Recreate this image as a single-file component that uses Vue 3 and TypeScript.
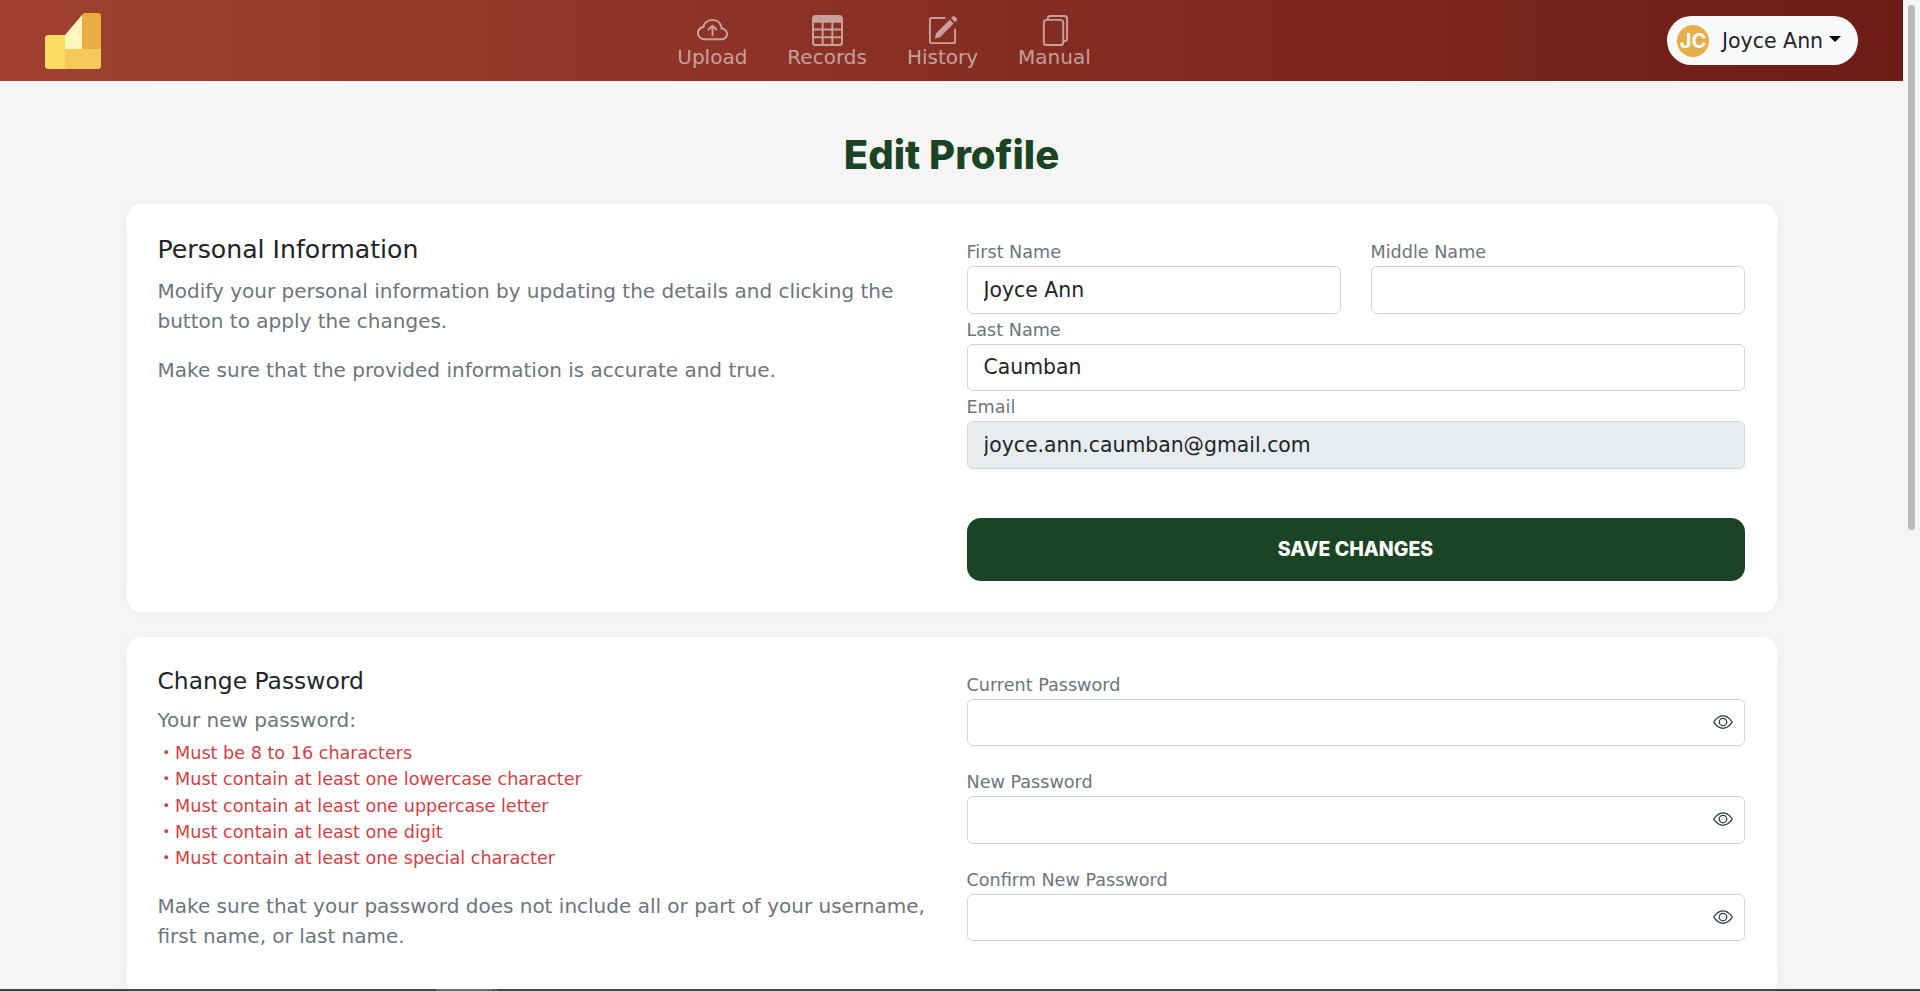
<script setup lang="ts">
const rules: string[] = [
  'Must be 8 to 16 characters',
  'Must contain at least one lowercase character',
  'Must contain at least one uppercase letter',
  'Must contain at least one digit',
  'Must contain at least one special character',
]
const passwords: string[] = ['Current Password', 'New Password', 'Confirm New Password']
</script>

<template>
  <div class="screen">
    <div class="viewport">
      <div class="page">
        <header class="topbar">
          <svg class="logo" viewBox="0 0 56 56" aria-label="Logo">
            <path d="M20 22H3a3 3 0 0 0-3 3v28a3 3 0 0 0 3 3h17z" fill="#fadc63" />
            <path d="M20 22 37 2v34H20z" fill="#fff6bd" />
            <path d="M37 2l2-2h14a3 3 0 0 1 3 3v33H37z" fill="#e8ad47" />
            <path d="M20 36h36v17a3 3 0 0 1-3 3H20z" fill="#f5ca5a" />
          </svg>
          <nav class="nav">
            <a class="nav-item">
              <svg viewBox="0 0 16 16" fill="currentColor">
                <path fill-rule="evenodd" d="M7.646 5.146a.5.5 0 0 1 .708 0l2 2a.5.5 0 0 1-.708.708L8.5 6.707V10.5a.5.5 0 0 1-1 0V6.707L6.354 7.854a.5.5 0 1 1-.708-.708l2-2z" />
                <path d="M4.406 3.342A5.53 5.53 0 0 1 8 2c2.69 0 4.923 2 5.166 4.579C14.758 6.804 16 8.137 16 9.773 16 11.569 14.502 13 12.687 13H3.781C1.708 13 0 11.366 0 9.318c0-1.763 1.266-3.223 2.942-3.593.143-.863.698-1.723 1.464-2.383zm.653.757c-.757.653-1.153 1.44-1.153 2.056v.448l-.445.049C2.064 6.805 1 7.952 1 9.318 1 10.785 2.23 12 3.781 12h8.906C13.98 12 15 10.988 15 9.773c0-1.216-1.02-2.228-2.313-2.228h-.5v-.5C12.188 4.825 10.328 3 8 3a4.53 4.53 0 0 0-2.941 1.1z" />
              </svg>
              <span>Upload</span>
            </a>
            <a class="nav-item">
              <svg viewBox="0 0 16 16" fill="currentColor">
                <path d="M0 2a2 2 0 0 1 2-2h12a2 2 0 0 1 2 2v12a2 2 0 0 1-2 2H2a2 2 0 0 1-2-2V2zm15 2h-4v3h4V4zm0 4h-4v3h4V8zm0 4h-4v3h3a1 1 0 0 0 1-1v-2zm-5 3v-3H6v3h4zm-5 0v-3H1v2a1 1 0 0 0 1 1h3zm-4-4h4V8H1v3zm0-4h4V4H1v3zm5-3v3h4V4H6zm4 4H6v3h4V8z" />
              </svg>
              <span>Records</span>
            </a>
            <a class="nav-item">
              <svg viewBox="0 0 16 16" fill="currentColor">
                <path d="M15.502 1.94a.5.5 0 0 1 0 .706L14.459 3.69l-2-2L13.502.646a.5.5 0 0 1 .707 0l1.293 1.293zm-1.75 2.456-2-2L4.939 9.21a.5.5 0 0 0-.121.196l-.805 2.414a.25.25 0 0 0 .316.316l2.414-.805a.5.5 0 0 0 .196-.12l6.813-6.814z" />
                <path fill-rule="evenodd" d="M1 13.5A1.5 1.5 0 0 0 2.5 15h11a1.5 1.5 0 0 0 1.5-1.5v-6a.5.5 0 0 0-1 0v6a.5.5 0 0 1-.5.5h-11a.5.5 0 0 1-.5-.5v-11a.5.5 0 0 1 .5-.5H9a.5.5 0 0 0 0-1H2.5A1.5 1.5 0 0 0 1 2.5v11z" />
              </svg>
              <span>History</span>
            </a>
            <a class="nav-item">
              <svg viewBox="0 0 16 16" fill="currentColor">
                <path d="M13 0H6a2 2 0 0 0-2 2 2 2 0 0 0-2 2v10a2 2 0 0 0 2 2h7a2 2 0 0 0 2-2 2 2 0 0 0 2-2V2a2 2 0 0 0-2-2zm0 13V4a2 2 0 0 0-2-2H5a1 1 0 0 1 1-1h7a1 1 0 0 1 1 1v10a1 1 0 0 1-1 1zM3 4a1 1 0 0 1 1-1h7a1 1 0 0 1 1 1v10a1 1 0 0 1-1 1H4a1 1 0 0 1-1-1V4z" />
              </svg>
              <span>Manual</span>
            </a>
          </nav>
          <button class="user" type="button">
            <span class="avatar">JC</span>
            <span class="user-name">Joyce Ann</span>
            <span class="caret"></span>
          </button>
        </header>

        <main class="content">
          <h1 class="title">Edit Profile</h1>

          <section class="card">
            <div class="intro">
              <h2 class="heading">Personal Information</h2>
              <p class="text first">Modify your personal information by updating the details and clicking the button to apply the changes.</p>
              <p class="text next">Make sure that the provided information is accurate and true.</p>
            </div>
            <form class="form" @submit.prevent>
              <div class="pair">
                <label class="field">
                  <span class="label">First Name</span>
                  <input class="input" type="text" value="Joyce Ann" />
                </label>
                <label class="field">
                  <span class="label">Middle Name</span>
                  <input class="input" type="text" />
                </label>
              </div>
              <label class="field">
                <span class="label">Last Name</span>
                <input class="input" type="text" value="Caumban" />
              </label>
              <label class="field">
                <span class="label">Email</span>
                <input class="input" type="text" value="joyce.ann.caumban@gmail.com" disabled />
              </label>
              <button class="save" type="submit">SAVE CHANGES</button>
            </form>
          </section>

          <section class="card">
            <div class="intro">
              <h2 class="heading small">Change Password</h2>
              <p class="text lead">Your new password:</p>
              <ul class="rules">
                <li v-for="rule in rules" :key="rule"><span class="dot">・</span>{{ rule }}</li>
              </ul>
              <p class="text note">Make sure that your password does not include all or part of your username, first name, or last name.</p>
            </div>
            <form class="form" @submit.prevent>
              <label v-for="name in passwords" :key="name" class="field spaced">
                <span class="label">{{ name }}</span>
                <span class="password">
                  <input class="input" type="password" />
                  <svg class="eye" viewBox="0 0 16 16" fill="currentColor">
                    <path d="M16 8s-3-5.5-8-5.5S0 8 0 8s3 5.5 8 5.5S16 8 16 8zM1.173 8a13.133 13.133 0 0 1 1.66-2.043C4.12 4.668 5.88 3.5 8 3.5c2.12 0 3.879 1.168 5.168 2.457A13.133 13.133 0 0 1 14.828 8c-.058.087-.122.183-.195.288-.335.48-.83 1.12-1.465 1.755C11.879 11.332 10.119 12.5 8 12.5c-2.12 0-3.879-1.168-5.168-2.457A13.134 13.134 0 0 1 1.172 8z" />
                    <path d="M8 5.5a2.5 2.5 0 1 0 0 5 2.5 2.5 0 0 0 0-5zM4.5 8a3.5 3.5 0 1 1 7 0 3.5 3.5 0 0 1-7 0z" />
                  </svg>
                </span>
              </label>
            </form>
          </section>
        </main>
      </div>
      <div class="rail"><div class="thumb"></div></div>
    </div>
    <div class="strip"><span class="strip-a"></span><span class="strip-b"></span></div>
  </div>
</template>

<style scoped>
.screen {
  height: 991px;
  display: flex;
  flex-direction: column;
  overflow: hidden;
  font-family: "DejaVu Sans", sans-serif;
  color: #212529;
}
.viewport {
  height: 989px;
  display: flex;
  overflow: hidden;
}
.page {
  flex: 1;
  min-width: 0;
  height: 989px;
  overflow: hidden;
}
.rail {
  width: 17px;
  flex: none;
  padding: 5px 5px 0;
  box-sizing: border-box;
}
.thumb {
  width: 7px;
  height: 525px;
  border-radius: 4px;
  background: #b9b9b9;
}
.strip {
  height: 2px;
  background: #444;
  display: flex;
  padding-left: 436px;
}
.strip-a {
  width: 56px;
  background: #6c6c6c;
}
.strip-b {
  width: 5px;
  background: #555;
}
.topbar {
  height: 81px;
  padding: 0 45px;
  display: flex;
  align-items: center;
  justify-content: space-between;
  background: linear-gradient(90deg, #a04130 0%, #6e1b17 100%);
}
.logo {
  width: 56px;
  height: 56px;
  flex: none;
}
.nav {
  display: flex;
  gap: 40px;
}
.nav-item {
  display: flex;
  flex-direction: column;
  align-items: center;
  color: rgba(255, 255, 255, 0.55);
  font-size: 20px;
  line-height: 24px;
}
.nav-item svg {
  width: 31px;
  height: 31px;
  margin: 2px 0 -1px;
}
.user {
  width: 191px;
  height: 49px;
  border: 0;
  border-radius: 25px;
  background: #f8f9fa;
  display: flex;
  align-items: center;
  padding: 0 0 0 10px;
  font: inherit;
  color: #212529;
}
.avatar {
  width: 32px;
  height: 32px;
  border-radius: 50%;
  background: #e8ad4b;
  color: #fff;
  font-family: Inter, sans-serif;
  font-size: 20px;
  font-weight: 700;
  line-height: 32px;
  text-align: center;
}
.user-name {
  margin-left: 13px;
  font-size: 20.5px;
}
.caret {
  margin-left: 6px;
  margin-top: -3px;
  border-top: 6px solid #000;
  border-left: 6px solid transparent;
  border-right: 6px solid transparent;
}
.content {
  width: 1650px;
  margin: 0 auto;
  padding-top: 44px;
}
.title {
  margin: 0 0 19px;
  font-family: Inter, sans-serif;
  font-size: 40px;
  line-height: 60px;
  font-weight: 800;
  text-align: center;
  color: #1a4423;
}
.card {
  display: grid;
  grid-template-columns: 1fr 1fr;
  column-gap: 31px;
  padding: 27px 32px 31.5px 31px;
  margin-bottom: 24.5px;
  background: #fff;
  border-radius: 14px;
  box-shadow: 0 2px 16px rgba(0, 0, 0, 0.04);
}
.heading {
  margin: 0;
  padding-top: 2px;
  font-size: 25.2px;
  line-height: 34px;
  font-weight: 400;
  color: #212529;
}
.heading.small {
  padding-top: 0;
  font-size: 23.4px;
  line-height: 35.5px;
}
.text {
  margin: 0;
  font-size: 20px;
  line-height: 30px;
  color: #6c757d;
}
.first {
  margin-top: 9px;
}
.next {
  margin-top: 19px;
}
.lead {
  margin-top: 6px;
}
.rules {
  list-style: none;
  margin: 5px 0 0;
  padding: 0;
  font-size: 17.6px;
  line-height: 26.25px;
  color: #d13f45;
}
.rules li {
  height: 26.25px;
}
.dot {
  font-family: "Noto Sans CJK JP", sans-serif;
  line-height: 0;
}
.note {
  margin-top: 20px;
}
.form {
  padding-top: 9px;
  min-width: 0;
}
.pair {
  display: grid;
  grid-template-columns: 1fr 1fr;
  column-gap: 30px;
}
.field {
  display: block;
  margin-bottom: 4px;
}
.field.spaced {
  margin-bottom: 24px;
}
.label {
  display: block;
  height: 26px;
  font-size: 17.6px;
  line-height: 24px;
  color: #6c757d;
}
.input {
  display: block;
  width: 100%;
  height: 47.5px;
  box-sizing: border-box;
  padding: 0 16px;
  border: 1px solid #ced4da;
  border-radius: 6px;
  background: #fff;
  font: inherit;
  font-size: 20.4px;
  color: #212529;
  outline: none;
}
.input:disabled {
  background: #e9ecef;
  color: #212529;
  opacity: 1;
}
.password {
  display: block;
  position: relative;
}
.eye {
  position: absolute;
  top: 13px;
  right: 12px;
  width: 20px;
  height: 20px;
  color: #2f3b4c;
}
.save {
  display: block;
  width: 100%;
  height: 62.5px;
  margin-top: 49.5px;
  border: 0;
  border-radius: 14px;
  background: #1a4423;
  color: #fff;
  font-family: Inter, sans-serif;
  font-size: 19.5px;
  font-weight: 800;
}
</style>

<style>
html,
body {
  margin: 0;
  overflow: hidden;
  background: #f5f5f5;
}
</style>
